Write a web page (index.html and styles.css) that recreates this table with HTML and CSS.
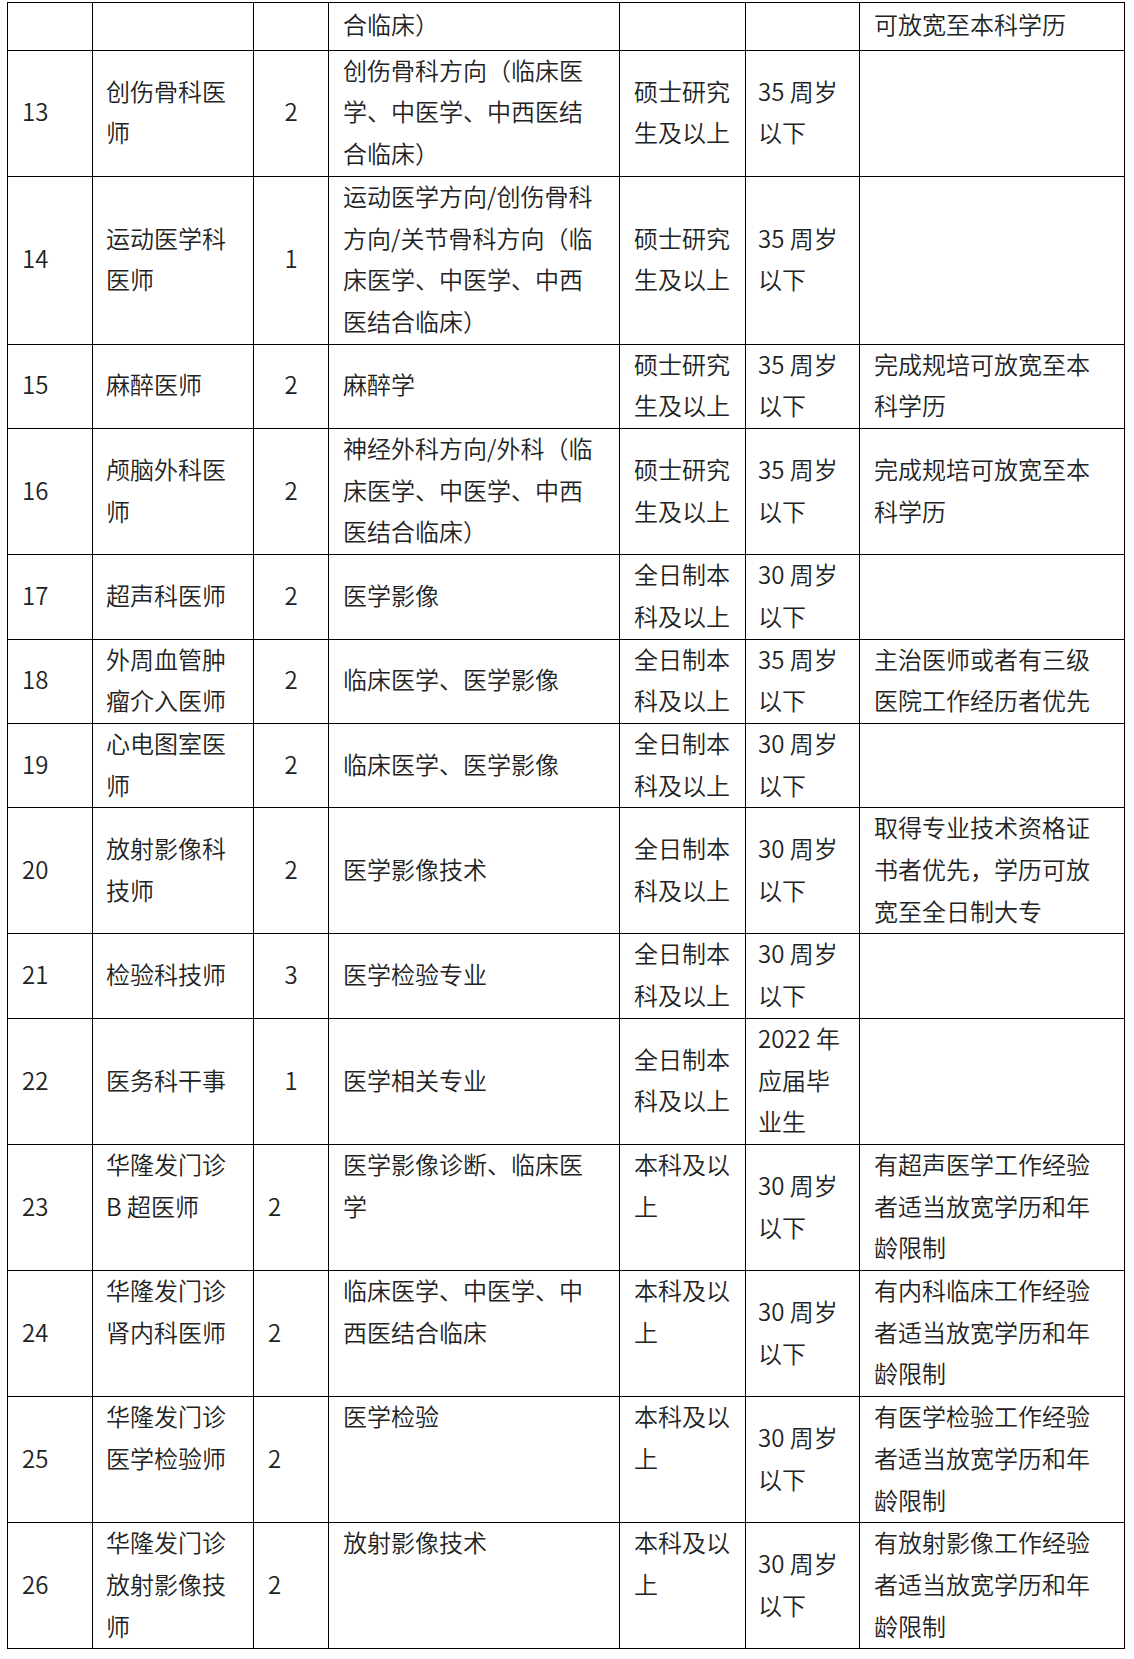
FILE: index.html
```html
<!DOCTYPE html>
<html lang="zh-CN">
<head>
<meta charset="utf-8">
<title>岗位表</title>
<link rel="stylesheet" href="styles.css">
</head>
<body>
<table class="jobs">
  <colgroup>
    <col class="c-no">
    <col class="c-post">
    <col class="c-num">
    <col class="c-major">
    <col class="c-edu">
    <col class="c-age">
    <col class="c-note">
  </colgroup>
  <tbody>
    <tr class="partial">
      <td></td><td></td><td></td>
      <td><div class="t">合临床）</div></td>
      <td></td><td></td>
      <td><div class="t">可放宽至本科学历</div></td>
    </tr>
    <tr>
      <td><div class="t">13</div></td>
      <td><div class="t">创伤骨科医<br>师</div></td>
      <td class="center"><div class="t">2</div></td>
      <td><div class="t">创伤骨科方向（临床医<br>学、中医学、中西医结<br>合临床）</div></td>
      <td><div class="t">硕士研究<br>生及以上</div></td>
      <td><div class="t">35 周岁<br>以下</div></td>
      <td></td>
    </tr>
    <tr>
      <td><div class="t">14</div></td>
      <td><div class="t">运动医学科<br>医师</div></td>
      <td class="center"><div class="t">1</div></td>
      <td><div class="t">运动医学方向/创伤骨科<br>方向/关节骨科方向（临<br>床医学、中医学、中西<br>医结合临床）</div></td>
      <td><div class="t">硕士研究<br>生及以上</div></td>
      <td><div class="t">35 周岁<br>以下</div></td>
      <td></td>
    </tr>
    <tr>
      <td><div class="t">15</div></td>
      <td><div class="t">麻醉医师</div></td>
      <td class="center"><div class="t">2</div></td>
      <td><div class="t">麻醉学</div></td>
      <td><div class="t">硕士研究<br>生及以上</div></td>
      <td><div class="t">35 周岁<br>以下</div></td>
      <td><div class="t">完成规培可放宽至本<br>科学历</div></td>
    </tr>
    <tr>
      <td><div class="t">16</div></td>
      <td><div class="t">颅脑外科医<br>师</div></td>
      <td class="center"><div class="t">2</div></td>
      <td><div class="t">神经外科方向/外科（临<br>床医学、中医学、中西<br>医结合临床）</div></td>
      <td><div class="t">硕士研究<br>生及以上</div></td>
      <td><div class="t">35 周岁<br>以下</div></td>
      <td><div class="t">完成规培可放宽至本<br>科学历</div></td>
    </tr>
    <tr>
      <td><div class="t">17</div></td>
      <td><div class="t">超声科医师</div></td>
      <td class="center"><div class="t">2</div></td>
      <td><div class="t">医学影像</div></td>
      <td><div class="t">全日制本<br>科及以上</div></td>
      <td><div class="t">30 周岁<br>以下</div></td>
      <td></td>
    </tr>
    <tr>
      <td><div class="t">18</div></td>
      <td><div class="t">外周血管肿<br>瘤介入医师</div></td>
      <td class="center"><div class="t">2</div></td>
      <td><div class="t">临床医学、医学影像</div></td>
      <td><div class="t">全日制本<br>科及以上</div></td>
      <td><div class="t">35 周岁<br>以下</div></td>
      <td><div class="t">主治医师或者有三级<br>医院工作经历者优先</div></td>
    </tr>
    <tr>
      <td><div class="t">19</div></td>
      <td><div class="t">心电图室医<br>师</div></td>
      <td class="center"><div class="t">2</div></td>
      <td><div class="t">临床医学、医学影像</div></td>
      <td><div class="t">全日制本<br>科及以上</div></td>
      <td><div class="t">30 周岁<br>以下</div></td>
      <td></td>
    </tr>
    <tr>
      <td><div class="t">20</div></td>
      <td><div class="t">放射影像科<br>技师</div></td>
      <td class="center"><div class="t">2</div></td>
      <td><div class="t">医学影像技术</div></td>
      <td><div class="t">全日制本<br>科及以上</div></td>
      <td><div class="t">30 周岁<br>以下</div></td>
      <td><div class="t">取得专业技术资格证<br>书者优先，学历可放<br>宽至全日制大专</div></td>
    </tr>
    <tr>
      <td><div class="t">21</div></td>
      <td><div class="t">检验科技师</div></td>
      <td class="center"><div class="t">3</div></td>
      <td><div class="t">医学检验专业</div></td>
      <td><div class="t">全日制本<br>科及以上</div></td>
      <td><div class="t">30 周岁<br>以下</div></td>
      <td></td>
    </tr>
    <tr>
      <td><div class="t">22</div></td>
      <td><div class="t">医务科干事</div></td>
      <td class="center"><div class="t">1</div></td>
      <td><div class="t">医学相关专业</div></td>
      <td><div class="t">全日制本<br>科及以上</div></td>
      <td><div class="t">2022 年<br>应届毕<br>业生</div></td>
      <td></td>
    </tr>
    <tr>
      <td><div class="t">23</div></td>
      <td class="top"><div class="t">华隆发门诊<br>B 超医师</div></td>
      <td><div class="t">2</div></td>
      <td class="top"><div class="t">医学影像诊断、临床医<br>学</div></td>
      <td class="top"><div class="t">本科及以<br>上</div></td>
      <td><div class="t">30 周岁<br>以下</div></td>
      <td><div class="t">有超声医学工作经验<br>者适当放宽学历和年<br>龄限制</div></td>
    </tr>
    <tr>
      <td><div class="t">24</div></td>
      <td class="top"><div class="t">华隆发门诊<br>肾内科医师</div></td>
      <td><div class="t">2</div></td>
      <td class="top"><div class="t">临床医学、中医学、中<br>西医结合临床</div></td>
      <td class="top"><div class="t">本科及以<br>上</div></td>
      <td><div class="t">30 周岁<br>以下</div></td>
      <td><div class="t">有内科临床工作经验<br>者适当放宽学历和年<br>龄限制</div></td>
    </tr>
    <tr>
      <td><div class="t">25</div></td>
      <td class="top"><div class="t">华隆发门诊<br>医学检验师</div></td>
      <td><div class="t">2</div></td>
      <td class="top"><div class="t">医学检验</div></td>
      <td class="top"><div class="t">本科及以<br>上</div></td>
      <td><div class="t">30 周岁<br>以下</div></td>
      <td><div class="t">有医学检验工作经验<br>者适当放宽学历和年<br>龄限制</div></td>
    </tr>
    <tr>
      <td><div class="t">26</div></td>
      <td class="top"><div class="t">华隆发门诊<br>放射影像技<br>师</div></td>
      <td><div class="t">2</div></td>
      <td class="top"><div class="t">放射影像技术</div></td>
      <td class="top"><div class="t">本科及以<br>上</div></td>
      <td><div class="t">30 周岁<br>以下</div></td>
      <td><div class="t">有放射影像工作经验<br>者适当放宽学历和年<br>龄限制</div></td>
    </tr>
  </tbody>
</table>
</body>
</html>
```

FILE: styles.css
```css
html, body {
  margin: 0;
  padding: 0;
  background: #ffffff;
}

body {
  padding: 2px 0 0 7px;
  font-family: "Noto Sans CJK SC", "Noto Sans", sans-serif;
  color: #222222;
}

.jobs {
  border-collapse: collapse;
  table-layout: fixed;
  width: 1118px;
  font-size: 24px;
  font-weight: 350;
  line-height: 41.7px;
}

.c-no { width: 85px; }
.c-post { width: 161px; }
.c-num { width: 75px; }
.c-major { width: 291px; }
.c-edu { width: 126px; }
.c-age { width: 114px; }
.c-note { width: 265px; }

.jobs td {
  border: 1px solid #000;
  padding: 0 10px 0 14px;
  vertical-align: middle;
  text-align: left;
  white-space: nowrap;
  overflow: hidden;
}

.jobs .t {
  margin: -2px 0 2px;
}

.jobs td:first-child {
  padding-left: 14px;
}

.jobs td:nth-child(2) {
  padding-left: 13px;
}

.jobs td:nth-child(6) {
  padding-left: 12px;
}

.jobs td.center {
  text-align: center;
  padding: 0;
}

.jobs td.top {
  vertical-align: top;
}

.jobs tr.partial td {
  height: 46.7px;
}
```
